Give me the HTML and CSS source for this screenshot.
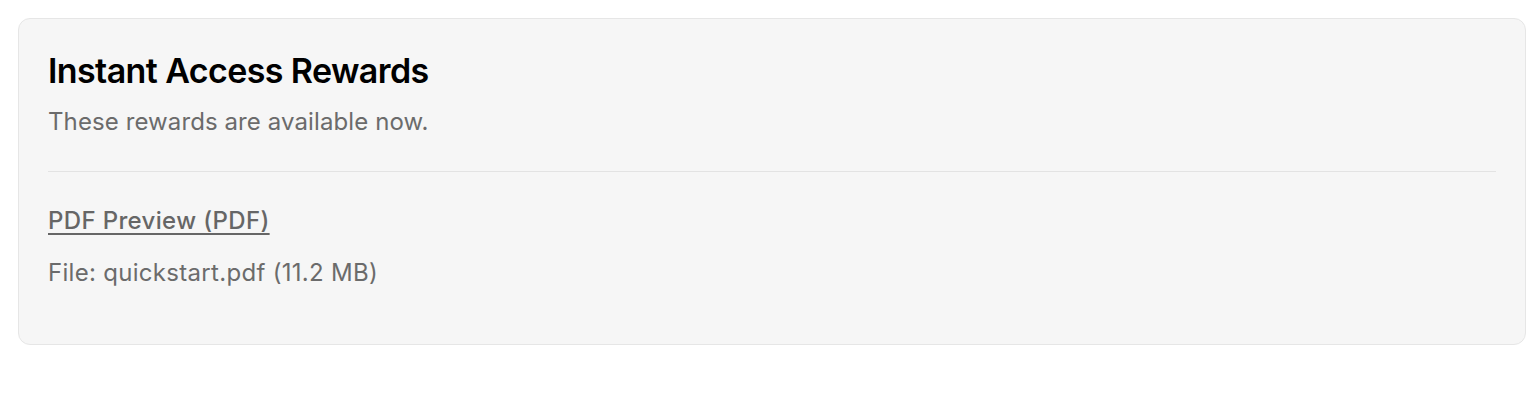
FILE: index.html
```html
<!DOCTYPE html>
<html lang="en">
<head>
<meta charset="utf-8">
<title>Instant Access Rewards</title>
<link rel="stylesheet" href="styles.css">
</head>
<body>
  <section class="card">
    <header class="card-header">
      <h2 class="card-title">Instant Access Rewards</h2>
      <p class="card-subtitle">These rewards are available now.</p>
    </header>
    <div class="reward">
      <a class="reward-link" href="#">PDF Preview (PDF)</a>
      <p class="reward-meta">File: quickstart.pdf (11.2 MB)</p>
    </div>
  </section>
</body>
</html>
```
FILE: styles.css
```css
html, body {
  margin: 0;
  padding: 0;
  background: #ffffff;
}
body {
  padding: 18px 14px 0 18px;
  font-family: Inter, "Liberation Sans", sans-serif;
}
.card {
  box-sizing: border-box;
  background: #f6f6f6;
  border: 1px solid #e6e6e6;
  border-radius: 12px;
  padding: 32px 29px 0 29px;
  height: 327px;
}
.card-header {
  padding-bottom: 33px;
  border-bottom: 1px solid #e3e3e3;
}
.card-title {
  margin: 0;
  font-weight: 600;
  font-size: 34px;
  line-height: 40px;
  letter-spacing: -0.6px;
  color: #000;
}
.card-subtitle {
  margin: 15px 0 0 0;
  font-size: 24px;
  line-height: 32px;
  letter-spacing: 0.1px;
  color: #6b6b6b;
}
.reward {
  padding-top: 33px;
}
.reward-link {
  display: inline-block;
  font-size: 24px;
  line-height: 32px;
  font-weight: 500;
  letter-spacing: 0.35px;
  color: #666666;
  text-decoration: underline;
  text-decoration-thickness: 2px;
  text-underline-offset: 4px;
}
.reward-meta {
  margin: 20px 0 0 0;
  font-size: 24px;
  line-height: 32px;
  letter-spacing: 0.3px;
  color: #6b6b6b;
}
```
